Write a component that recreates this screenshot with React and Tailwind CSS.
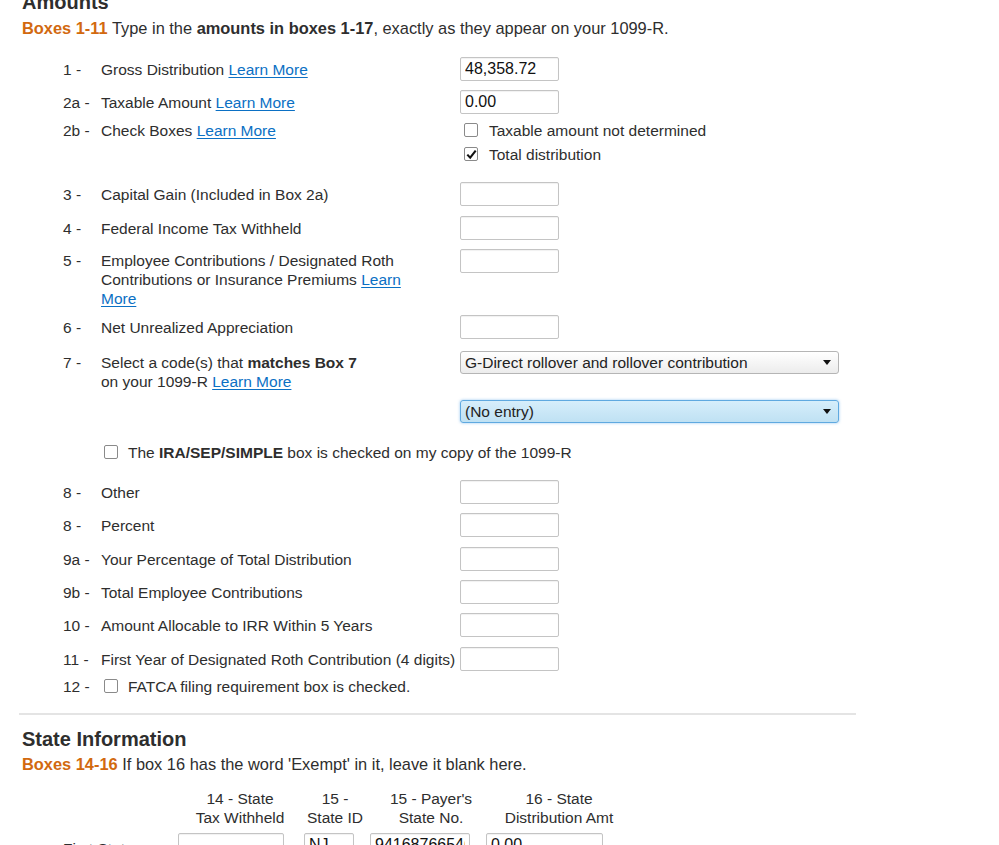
const LINK = 'text-[#0b70c4] underline underline-offset-[2px]';

function LearnMore() {
  return <a href="#" className={LINK}>Learn More</a>;
}

function Box({ value = '', className = 'w-[99px]' }) {
  return (
    <input
      readOnly
      value={value}
      className={`h-[24px] ${className} rounded-[2px] border border-[#c4c4c4] bg-white px-[4px] text-[16px] text-[#111] shadow-[inset_0_1px_1px_rgba(0,0,0,0.06)] outline-none`}
    />
  );
}

function Check({ checked }) {
  return (
    <span className="inline-flex h-[14px] w-[14px] shrink-0 items-center justify-center rounded-[2px] border border-[#8a8a8a] bg-white">
      {checked && (
        <svg width="11" height="11" viewBox="0 0 11 11">
          <path d="M1.3 5.6 L4.2 8.7 L9.7 1.6" fill="none" stroke="#111" strokeWidth="2.1" />
        </svg>
      )}
    </span>
  );
}

function Dropdown({ label, focused }) {
  const skin = focused
    ? 'border-[#5fa9e0] bg-gradient-to-b from-[#d6eefb] to-[#bfe1f3] shadow-[0_0_3px_rgba(80,160,230,0.6)]'
    : 'border-[#b5b5b5] bg-gradient-to-b from-white to-[#ececec]';
  return (
    <div className={`flex h-[23px] w-[379px] items-center justify-between rounded-[3px] border px-[4px] text-[#222] ${skin}`}>
      <span>{label}</span>
      <span className="mr-[3px] h-0 w-0 border-x-[4px] border-t-[5px] border-x-transparent border-t-[#111]" />
    </div>
  );
}

// one numbered line of the form: number, label, field
function Row({ num, children, field, top, multi }) {
  return (
    <div className={`flex ${multi ? 'items-start' : 'items-center'} ${top}`}>
      <span className={`w-[38px] shrink-0 ${multi ? 'pt-[2px]' : ''}`}>{num}</span>
      <div className={`w-[359px] shrink-0 ${multi ? 'pt-[2px] pr-[30px]' : ''}`}>{children}</div>
      {field}
    </div>
  );
}

const SIMPLE_ROWS = [
  { num: '8 -', label: 'Other', top: 'mt-[16px]' },
  { num: '8 -', label: 'Percent', top: 'mt-[9px]' },
  { num: '9a -', label: 'Your Percentage of Total Distribution', top: 'mt-[10px]' },
  { num: '9b -', label: 'Total Employee Contributions', top: 'mt-[9px]' },
  { num: '10 -', label: 'Amount Allocable to IRR Within 5 Years', top: 'mt-[9px]' },
  { num: '11 -', label: 'First Year of Designated Roth Contribution (4 digits)', top: 'mt-[10px]' },
];

export default function App() {
  return (
    <div className="min-h-screen overflow-hidden bg-white pl-[22px] font-['Liberation_Sans',Arial,sans-serif] text-[15.5px] leading-[19px] text-[#2e2e2e]">
      <h2 className="mt-[-10px] text-[20px] font-bold leading-[24px]">Amounts</h2>
      <p className="mt-[5px] text-[16.4px]">
        <span className="font-bold text-[#d2690f]">Boxes 1-11</span> Type in the <b>amounts in boxes 1-17</b>, exactly as they appear on your 1099-R.
      </p>

      <div className="ml-[41px]">
        <Row num="1 -" top="mt-[19px]" field={<Box value="48,358.72" />}>
          Gross Distribution <LearnMore />
        </Row>
        <Row num="2a -" top="mt-[9px]" field={<Box value="0.00" />}>
          Taxable Amount <LearnMore />
        </Row>

        <div className="mt-[4px] flex items-start">
          <span className="flex h-[24px] w-[38px] shrink-0 items-center">2b -</span>
          <div className="flex h-[24px] w-[359px] shrink-0 items-center">
            <span>
              Check Boxes <LearnMore />
            </span>
          </div>
          <div className="flex flex-col pl-[4px]">
            <label className="flex h-[24px] items-center gap-[11px]">
              <Check />
              Taxable amount not determined
            </label>
            <label className="flex h-[24px] items-center gap-[11px]">
              <Check checked />
              Total distribution
            </label>
          </div>
        </div>

        <Row num="3 -" top="mt-[16px]" field={<Box />}>Capital Gain (Included in Box 2a)</Row>
        <Row num="4 -" top="mt-[10px]" field={<Box />}>Federal Income Tax Withheld</Row>
        <Row num="5 -" top="mt-[9px]" multi field={<Box />}>
          Employee Contributions / Designated Roth Contributions or Insurance Premiums <LearnMore />
        </Row>
        <Row num="6 -" top="mt-[7px]" field={<Box />}>Net Unrealized Appreciation</Row>

        <div className="mt-[12px] flex items-start">
          <span className="w-[38px] shrink-0 pt-[2px]">7 -</span>
          <div className="w-[359px] shrink-0 pt-[2px]">
            Select a code(s) that <b>matches Box 7</b>
            <br />
            on your 1099-R <LearnMore />
          </div>
          <Dropdown label="G-Direct rollover and rollover contribution" />
        </div>
        <div className="mt-[9px] ml-[397px]">
          <Dropdown label="(No entry)" focused />
        </div>

        <label className="mt-[17px] ml-[41px] flex h-[24px] items-center gap-[10px]">
          <Check />
          <span>
            The <b>IRA/SEP/SIMPLE</b> box is checked on my copy of the 1099-R
          </span>
        </label>

        {SIMPLE_ROWS.map((r, i) => (
          <Row key={i} num={r.num} top={r.top} field={<Box />}>
            {r.label}
          </Row>
        ))}

        <div className="mt-[3px] flex h-[24px] items-center">
          <span className="w-[38px] shrink-0">12 -</span>
          <label className="ml-[3px] flex items-center gap-[10px]">
            <Check />
            FATCA filing requirement box is checked.
          </label>
        </div>
      </div>

      <div className="ml-[-3px] mt-[15px] h-[2px] w-[837px] bg-[#e4e4e4]" />

      <h2 className="mt-[12px] text-[20px] font-bold leading-[24px]">State Information</h2>
      <p className="mt-[4px] text-[16.4px]">
        <span className="font-bold text-[#d2690f]">Boxes 14-16</span> If box 16 has the word 'Exempt' in it, leave it blank here.
      </p>

      <div className="ml-[41px]">
        <div className="mt-[15px] flex text-center">
          <div className="w-[115px]" />
          <div className="w-[124px]">14 - State<br />Tax Withheld</div>
          <div className="w-[66px]">15 -<br />State ID</div>
          <div className="w-[126px]">15 - Payer's<br />State No.</div>
          <div className="w-[130px]">16 - State<br />Distribution Amt</div>
        </div>
        <div className="mt-[6px] flex items-start">
          <span className="w-[115px] pt-[6px]">First State</span>
          <Box className="w-[106px]" />
          <Box value="NJ" className="ml-[20px] w-[50px]" />
          <Box value="94168766546" className="ml-[16px] w-[100px]" />
          <Box value="0.00" className="ml-[16px] w-[117px]" />
        </div>
      </div>
    </div>
  );
}
